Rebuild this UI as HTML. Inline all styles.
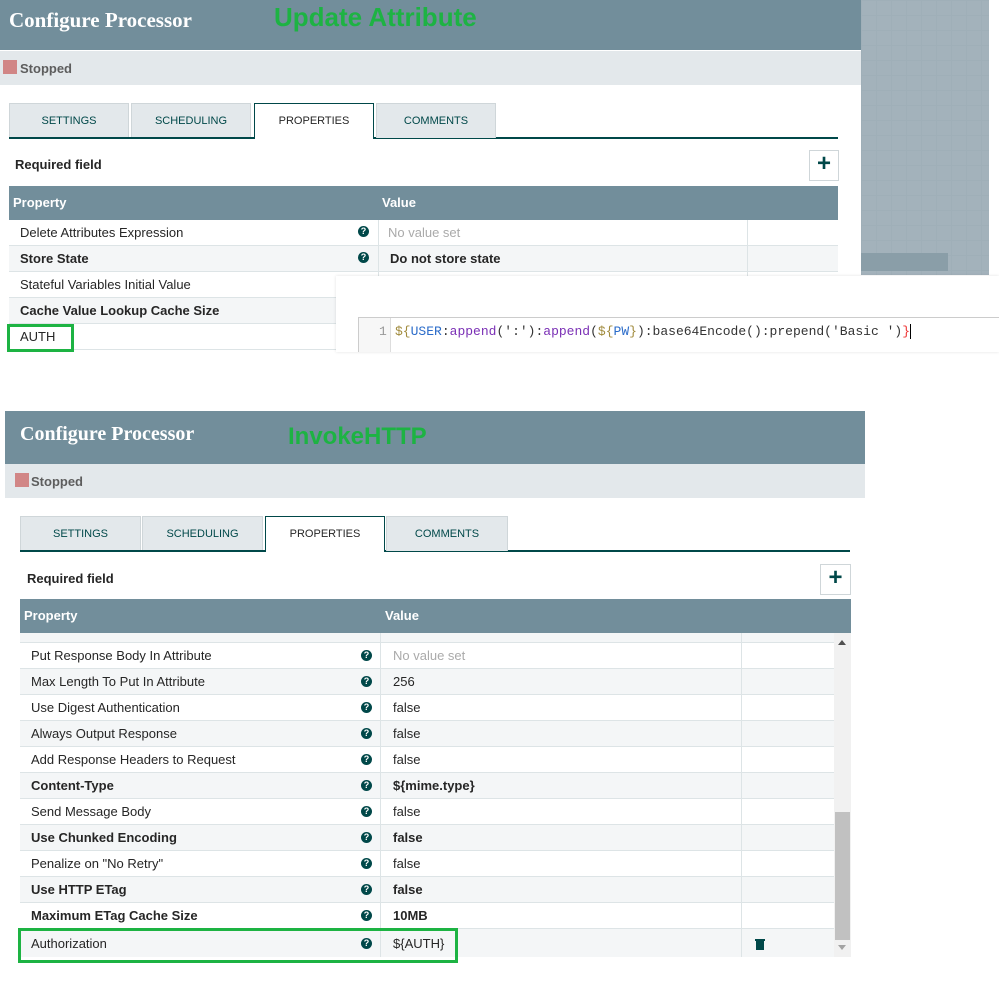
<!DOCTYPE html>
<html><head><meta charset="utf-8"><style>
*{margin:0;padding:0;box-sizing:border-box}
body{width:999px;height:999px;position:relative;background:#fff;font-family:"Liberation Sans",sans-serif;overflow:hidden;color:#262626}
.a{position:absolute}
.hdr{background:#728e9b}
.ttl{font-family:"Liberation Serif",serif;font-weight:bold;color:#fff;font-size:21px}
.grn{color:#1db343;font-weight:bold}
.stat{background:#e3e8eb}
.sq{width:14px;height:14px;background:#d18686}
.tab{background:#e3e8eb;border:1px solid #cfd6d9;border-bottom:none;font-size:11px;color:#004849;text-align:center;line-height:34px}
.tab.on{background:#fff;border:1px solid #004849;border-bottom:none;color:#262626;height:36px}
.row{font-size:13px;line-height:25px;border-bottom:1px solid #dde4e6;white-space:nowrap}
.g{background:#f4f6f7}
.b{font-weight:bold}
.q{width:11px;height:11px;border-radius:50%;background:#004849;color:#fff;font-size:9px;font-weight:bold;text-align:center;line-height:11px}
.plus{border:1px solid #cfd6d9;background:#fff;color:#004849;font-size:24px;font-weight:bold;text-align:center;line-height:26px}
</style></head><body>
<!-- grid bg -->
<div class="a" style="left:861px;top:0;width:128px;height:275px;background-color:#a3b2bb;background-image:linear-gradient(#9fafb8 1px,transparent 1px),linear-gradient(90deg,#9fafb8 1px,transparent 1px);background-size:15px 15px"></div>
<div class="a" style="left:861px;top:253px;width:87px;height:18px;background:#8a9ea8"></div>
<div class="a" style="left:989px;top:0;width:10px;height:275px;background:#fff"></div>

<!-- TOP PANEL -->
<div class="a hdr" style="left:0;top:0;width:861px;height:50px"></div>
<div class="a ttl" style="left:9px;top:8px">Configure Processor</div>
<div class="a grn" style="left:274px;top:2px;font-size:26px">Update Attribute</div>
<div class="a stat" style="left:0;top:51px;width:861px;height:34px"></div>
<div class="a sq" style="left:3px;top:60px"></div>
<div class="a" style="left:20px;top:61px;font-size:13px;font-weight:bold;color:#5d5d5d">Stopped</div>
<div class="a" style="left:0;top:85px;width:861px;height:191px;background:#fff"></div>
<div class="a tab" style="left:9px;top:103px;width:120px;height:35px">SETTINGS</div>
<div class="a tab" style="left:131px;top:103px;width:120px;height:35px">SCHEDULING</div>
<div class="a" style="left:9px;top:137px;width:829px;height:2px;background:#004849"></div>
<div class="a tab on" style="left:254px;top:103px;width:120px">PROPERTIES</div>
<div class="a tab" style="left:376px;top:103px;width:120px;height:35px">COMMENTS</div>
<div class="a b" style="left:15px;top:157px;font-size:13px">Required field</div>
<div class="a plus" style="left:809px;top:150px;width:30px;height:31px">+</div>
<div class="a hdr" style="left:9px;top:186px;width:829px;height:34px"></div>
<div class="a b" style="left:13px;top:195px;color:#fff;font-size:13px">Property</div>
<div class="a b" style="left:382px;top:195px;color:#fff;font-size:13px">Value</div>

<div class="a row" style="left:9px;top:220px;width:829px;height:26px"><span class="a" style="left:11px">Delete Attributes Expression</span><span class="a" style="left:379px;color:#aaa">No value set</span></div>
<div class="a row g" style="left:9px;top:246px;width:829px;height:26px"><span class="a b" style="left:11px">Store State</span><span class="a b" style="left:381px">Do not store state</span></div>
<div class="a row" style="left:9px;top:272px;width:829px;height:26px"><span class="a" style="left:11px">Stateful Variables Initial Value</span></div>
<div class="a row g" style="left:9px;top:298px;width:829px;height:26px"><span class="a b" style="left:11px">Cache Value Lookup Cache Size</span></div>
<div class="a row" style="left:9px;top:324px;width:829px;height:26px"><span class="a" style="left:11px">AUTH</span></div>
<div class="a" style="left:378px;top:220px;width:1px;height:56px;background:#dde4e6"></div>
<div class="a" style="left:747px;top:220px;width:1px;height:56px;background:#dde4e6"></div>
<div class="a q" style="left:358px;top:226px">?</div>
<div class="a q" style="left:358px;top:252px">?</div>
<div class="a" style="left:7px;top:324px;width:67px;height:28px;border:3px solid #1db343"></div>

<!-- code overlay -->
<div class="a" style="left:336px;top:276px;width:663px;height:76px;background:#fff;box-shadow:0 0 3px rgba(0,0,0,.12)"></div>
<div class="a" style="left:358px;top:317px;width:650px;height:35px;border:1px solid #ccc;border-bottom:none;background:#fff"></div>
<div class="a" style="left:359px;top:318px;width:32px;height:34px;background:#f7f7f7;border-right:1px solid #ddd"></div>
<div class="a" style="left:379px;top:324px;font-family:'Liberation Mono',monospace;font-size:13px;color:#999">1</div>
<div class="a" style="left:395px;top:324px;font-family:'Liberation Mono',monospace;font-size:13px;white-space:pre;color:#333"><span style="color:#a08a3c">${</span><span style="color:#2a6bc9">USER</span>:<span style="color:#7a2fb5">append</span>(<span style="color:#333">':'</span>):<span style="color:#7a2fb5">append</span>(<span style="color:#a08a3c">${</span><span style="color:#2a6bc9">PW</span><span style="color:#a08a3c">}</span>):base64Encode():prepend('Basic ')<span style="color:#e33">}</span><span style="border-left:1px solid #000"></span></div>

<!-- BOTTOM PANEL -->
<div class="a hdr" style="left:5px;top:411px;width:860px;height:53px"></div>
<div class="a ttl" style="left:20px;top:423px;font-size:20px">Configure Processor</div>
<div class="a grn" style="left:288px;top:423px;font-size:24px">InvokeHTTP</div>
<div class="a stat" style="left:5px;top:464px;width:860px;height:34px"></div>
<div class="a sq" style="left:15px;top:473px"></div>
<div class="a" style="left:31px;top:474px;font-size:13px;font-weight:bold;color:#5d5d5d">Stopped</div>
<div class="a tab" style="left:20px;top:516px;width:121px;height:35px">SETTINGS</div>
<div class="a tab" style="left:142px;top:516px;width:121px;height:35px">SCHEDULING</div>
<div class="a" style="left:20px;top:550px;width:830px;height:2px;background:#004849"></div>
<div class="a tab on" style="left:265px;top:516px;width:120px">PROPERTIES</div>
<div class="a tab" style="left:386px;top:516px;width:122px;height:35px">COMMENTS</div>
<div class="a b" style="left:27px;top:571px;font-size:13px">Required field</div>
<div class="a plus" style="left:820px;top:564px;width:31px;height:31px">+</div>
<div class="a hdr" style="left:20px;top:599px;width:831px;height:34px"></div>
<div class="a b" style="left:24px;top:608px;color:#fff;font-size:13px">Property</div>
<div class="a b" style="left:385px;top:608px;color:#fff;font-size:13px">Value</div>

<div class="a row g" style="left:20px;top:633px;width:814px;height:10px"></div>
<div class="a row" style="left:20px;top:643px;width:814px;height:26px"><span class="a" style="left:11px">Put Response Body In Attribute</span><span class="a" style="left:373px;color:#aaa">No value set</span></div>
<div class="a row g" style="left:20px;top:669px;width:814px;height:26px"><span class="a" style="left:11px">Max Length To Put In Attribute</span><span class="a" style="left:373px">256</span></div>
<div class="a row" style="left:20px;top:695px;width:814px;height:26px"><span class="a" style="left:11px">Use Digest Authentication</span><span class="a" style="left:373px">false</span></div>
<div class="a row g" style="left:20px;top:721px;width:814px;height:26px"><span class="a" style="left:11px">Always Output Response</span><span class="a" style="left:373px">false</span></div>
<div class="a row" style="left:20px;top:747px;width:814px;height:26px"><span class="a" style="left:11px">Add Response Headers to Request</span><span class="a" style="left:373px">false</span></div>
<div class="a row g" style="left:20px;top:773px;width:814px;height:26px"><span class="a b" style="left:11px">Content-Type</span><span class="a b" style="left:373px">${mime.type}</span></div>
<div class="a row" style="left:20px;top:799px;width:814px;height:26px"><span class="a" style="left:11px">Send Message Body</span><span class="a" style="left:373px">false</span></div>
<div class="a row g" style="left:20px;top:825px;width:814px;height:26px"><span class="a b" style="left:11px">Use Chunked Encoding</span><span class="a b" style="left:373px">false</span></div>
<div class="a row" style="left:20px;top:851px;width:814px;height:26px"><span class="a" style="left:11px">Penalize on "No Retry"</span><span class="a" style="left:373px">false</span></div>
<div class="a row g" style="left:20px;top:877px;width:814px;height:26px"><span class="a b" style="left:11px">Use HTTP ETag</span><span class="a b" style="left:373px">false</span></div>
<div class="a row" style="left:20px;top:903px;width:814px;height:26px"><span class="a b" style="left:11px">Maximum ETag Cache Size</span><span class="a b" style="left:373px">10MB</span></div>
<div class="a row g" style="left:20px;top:929px;width:814px;height:28px;border-bottom:none;line-height:30px"><span class="a" style="left:11px">Authorization</span><span class="a" style="left:373px">${AUTH}</span></div>
<div class="a" style="left:380px;top:633px;width:1px;height:324px;background:#dde4e6"></div>
<div class="a" style="left:741px;top:633px;width:1px;height:324px;background:#dde4e6"></div>
<div class="a q" style="left:361px;top:650px">?</div>
<div class="a q" style="left:361px;top:676px">?</div>
<div class="a q" style="left:361px;top:702px">?</div>
<div class="a q" style="left:361px;top:728px">?</div>
<div class="a q" style="left:361px;top:754px">?</div>
<div class="a q" style="left:361px;top:780px">?</div>
<div class="a q" style="left:361px;top:806px">?</div>
<div class="a q" style="left:361px;top:832px">?</div>
<div class="a q" style="left:361px;top:858px">?</div>
<div class="a q" style="left:361px;top:884px">?</div>
<div class="a q" style="left:361px;top:910px">?</div>
<div class="a q" style="left:361px;top:938px">?</div>
<!-- trash -->
<div class="a" style="left:755px;top:939px;width:10px;height:2px;background:#004849"></div>
<div class="a" style="left:756px;top:941px;width:8px;height:9px;background:#004849"></div>
<!-- scrollbar -->
<div class="a" style="left:834px;top:633px;width:17px;height:324px;background:#f1f1f1"></div>
<div class="a" style="left:835px;top:812px;width:15px;height:128px;background:#c1c1c1"></div>
<div class="a" style="left:838px;top:640px;width:0;height:0;border-left:4px solid transparent;border-right:4px solid transparent;border-bottom:5px solid #505050"></div>
<div class="a" style="left:838px;top:945px;width:0;height:0;border-left:4px solid transparent;border-right:4px solid transparent;border-top:5px solid #a3a3a3"></div>
<div class="a" style="left:18px;top:928px;width:440px;height:35px;border:3px solid #1db343"></div>
</body></html>
